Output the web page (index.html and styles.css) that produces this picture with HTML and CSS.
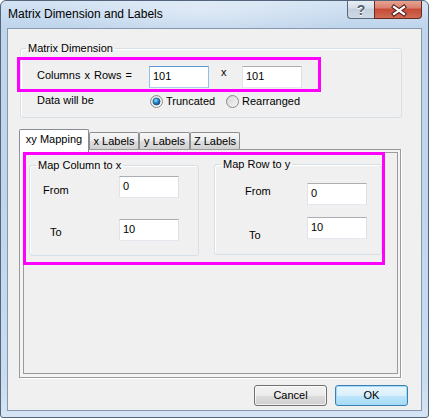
FILE: index.html
```html
<!DOCTYPE html>
<html>
<head>
<meta charset="utf-8">
<link rel="stylesheet" href="styles.css">
</head>
<body>
<div class="window">
  <div class="titlebar">
    <div class="title">Matrix Dimension and Labels</div>
    <div class="caption">
      <div class="cbtn help"><span>?</span></div>
      <div class="cbtn close">
        <svg width="46" height="18" viewBox="0 0 46 18">
          <path d="M19 7 L29 14 M29 7 L19 14" stroke="#4a1d18" stroke-width="4.2" stroke-linecap="square" fill="none"/>
          <path d="M19 7 L29 14 M29 7 L19 14" stroke="#ffffff" stroke-width="2.2" stroke-linecap="square" fill="none"/>
        </svg>
      </div>
    </div>
  </div>
  <div class="client">
    <fieldset class="group dim">
      <legend>Matrix Dimension</legend>
      <div class="hl hl-dim">
        <span class="lbl-cr">Columns x Rows =</span>
        <div class="edit focus">101</div>
        <span class="sep-x">x</span>
        <div class="edit">101</div>
      </div>
      <div class="data-row">
        <span class="lbl-data">Data will be</span>
        <div class="radio-item">
          <svg class="radio" width="13" height="13" viewBox="0 0 13 13">
            <defs>
              <linearGradient id="rbg" x1="0" y1="0" x2="1" y2="1">
                <stop offset="0" stop-color="#dcdcdc"/>
                <stop offset="1" stop-color="#ffffff"/>
              </linearGradient>
              <radialGradient id="dot" cx="0.4" cy="0.35" r="0.7">
                <stop offset="0" stop-color="#9fdcff"/>
                <stop offset="0.45" stop-color="#2a8fd0"/>
                <stop offset="1" stop-color="#0b3f6e"/>
              </radialGradient>
            </defs>
            <circle cx="6.5" cy="6.5" r="6" fill="url(#rbg)" stroke="#8a8a8a"/>
            <circle cx="6.5" cy="6.5" r="3.6" fill="url(#dot)" stroke="#1c4e7a" stroke-width="0.6"/>
          </svg>
          <span class="rtext">Truncated</span>
        </div>
        <div class="radio-item">
          <svg class="radio" width="13" height="13" viewBox="0 0 13 13">
            <defs>
              <linearGradient id="rbg2" x1="0" y1="0" x2="1" y2="1">
                <stop offset="0" stop-color="#cfcfcf"/>
                <stop offset="1" stop-color="#fbfbfb"/>
              </linearGradient>
            </defs>
            <circle cx="6.5" cy="6.5" r="6" fill="url(#rbg2)" stroke="#8a8a8a"/>
            <circle cx="6.5" cy="6.5" r="3.6" fill="none" stroke="#e8e8e8" stroke-width="0.8"/>
          </svg>
          <span class="rtext">Rearranged</span>
        </div>
      </div>
    </fieldset>

    <div class="tabs">
      <div class="tablist">
        <div class="tab active">xy Mapping</div>
        <div class="tab w50">x Labels</div>
        <div class="tab w51">y Labels</div>
        <div class="tab w50">Z Labels</div>
      </div>
      <div class="panel">
        <div class="panel-inner">
          <div class="hl hl-map">
            <fieldset class="group g1">
              <legend>Map Column to x</legend>
              <div class="frow r1a">
                <span class="flbl l1a">From</span>
                <div class="edit">0</div>
              </div>
              <div class="frow r1b">
                <span class="flbl l1b">To</span>
                <div class="edit">10</div>
              </div>
            </fieldset>
            <fieldset class="group g2">
              <legend>Map Row to y</legend>
              <div class="frow r2a">
                <span class="flbl l2a">From</span>
                <div class="edit">0</div>
              </div>
              <div class="frow r2b">
                <span class="flbl l2b">To</span>
                <div class="edit">10</div>
              </div>
            </fieldset>
          </div>
        </div>
      </div>
    </div>

    <div class="buttons">
      <div class="btn">Cancel</div>
      <div class="btn default">OK</div>
    </div>
  </div>
</div>
</body>
</html>
```

FILE: styles.css
```css
* { box-sizing: border-box; }

body {
  margin: 0;
  background: #ffffff;
  font-family: "Liberation Sans", Arial, sans-serif;
  font-size: 11px;
  line-height: 13px;
  color: #000;
}

.window {
  width: 429px;
  height: 418px;
  border: 1px solid #53657b;
  border-radius: 6px 6px 3px 3px;
  background: linear-gradient(180deg, #d4e3f3 0px, #bfd5ec 26px, #c0d6ed 200px, #cadcf0 380px, #d6e5f5 418px);
  display: flex;
  flex-direction: column;
  overflow: hidden;
}

.titlebar {
  height: 27px;
  flex-shrink: 0;
  display: flex;
  align-items: flex-start;
  background: radial-gradient(ellipse 160px 30px at 200px 10px, rgba(255,255,255,0.35), rgba(255,255,255,0));
}

.title {
  flex: 1;
  font-size: 12px;
  line-height: 14px;
  margin: 6px 0 0 7px;
  color: #000;
}

.caption {
  display: flex;
  margin: -1px 6px 0 0;
}

.cbtn {
  height: 19px;
  border: 1px solid #5b6878;
  border-top: none;
  display: flex;
  align-items: center;
  justify-content: center;
}

.help {
  width: 27px;
  border-right: none;
  border-radius: 0 0 0 4px;
  background: linear-gradient(180deg, #e9eff6 0%, #d5dfea 45%, #c3cfdd 50%, #cfd9e5 100%);
}

.help span {
  font-weight: bold;
  font-size: 14px;
  line-height: 14px;
  color: #56606c;
  text-shadow: 0 1px 0 #fff;
  margin-top: 1px;
}

.close {
  width: 48px;
  border-radius: 0 0 4px 0;
  border-color: #6a2a22;
  background: linear-gradient(180deg, #e8a797 0%, #d9806d 45%, #c74a35 50%, #cf6b55 100%);
}

.close svg { display: block; }

.client {
  margin: 0 6px;
  height: 383px;
  flex-shrink: 0;
  border: 1px solid #8598ae;
  background: #f0f0f0;
  display: flex;
  flex-direction: column;
  align-items: flex-start;
}

/* group boxes */
.group {
  margin: 0;
  padding: 0;
  border: 1px solid #d5dfe5;
  border-radius: 3px;
  box-shadow: inset 1px 1px 0 #fff;
  min-width: 0;
}

.group legend {
  padding: 0 2px;
  line-height: 13px;
}

.dim {
  width: 382px;
  margin: 13px 0 0 12px;
  padding-bottom: 9px;
}

.dim legend { margin-left: 5px; }

.hl {
  border: 3px solid #ff00ff;
  display: flex;
  align-items: flex-start;
}

.hl-dim {
  width: 304px;
  height: 35px;
  margin: 2px 0 0 -4px;
}

.lbl-cr {
  width: 112px;
  margin: 9px 0 0 17px;
  word-spacing: 1px;
  white-space: nowrap;
}

.sep-x {
  width: 33px;
  padding-left: 12px;
  margin-top: 6px;
}

.edit {
  width: 60px;
  height: 22px;
  flex-shrink: 0;
  background: #fff;
  border: 1px solid;
  border-color: #abadb3 #dbdfe6 #e3e9ef #e2e3ea;
  padding: 3px 0 0 3px;
}

.hl-dim .edit { margin-top: 6px; }

.edit.focus {
  border-color: #5c9ad6 #8fc0ea #a9d0f0 #8fc0ea;
}

.data-row {
  display: flex;
  align-items: flex-start;
}

.lbl-data {
  width: 113px;
  margin: 2px 0 0 16px;
}

.radio-item {
  width: 76px;
  display: flex;
  align-items: flex-start;
}

.radio {
  display: block;
  margin-top: 3px;
  flex-shrink: 0;
}

.rtext { margin: 3px 0 0 3px; }

/* tabs */
.tabs {
  margin: 11px 0 0 11px;
}

.tablist {
  display: flex;
  align-items: flex-end;
  height: 20px;
}

.tab {
  height: 17px;
  border: 1px solid #8c8e94;
  border-bottom: none;
  border-radius: 2px 2px 0 0;
  background: linear-gradient(180deg, #f6f6f6 0%, #ececec 50%, #dedede 51%, #d2d2d2 100%);
  text-align: center;
  padding-top: 2px;
  white-space: nowrap;
}

.w50 { width: 50px; }
.w51 { width: 51px; }

.tab.active {
  width: 70px;
  height: 23px;
  margin-bottom: -3px;
  padding-top: 3px;
  background: #ffffff;
  border-color: #898c95;
  position: relative;
  z-index: 1;
}

.panel {
  width: 382px;
  height: 229px;
  border: 1px solid #9a9a9a;
  padding: 2px 2px 3px 3px;
  background: #f4f4f4;
  box-shadow: 1px 1px 0 #ffffff;
}

.panel-inner {
  height: 100%;
  border: 1px solid #9a9a9a;
  background: #f0f0f0;
}

.hl-map {
  width: 362px;
  height: 113px;
  margin: -1px 0 0 -1px;
  position: relative;
  z-index: 2;
}

.g1 {
  width: 170px;
  margin: 4px 0 0 3px;
  padding-bottom: 14px;
}

.g2 {
  width: 168px;
  margin: 3px 0 0 15px;
  padding-bottom: 15px;
}

.g1 legend, .g2 legend { margin-left: 6px; }

.frow {
  display: flex;
  align-items: flex-start;
  height: 22px;
}

.r1a { margin-top: 4px; }
.r1b { margin-top: 21px; }
.r2a { margin-top: 12px; }
.r2b { margin-top: 12px; }

.flbl { flex-shrink: 0; }
.g1 .flbl { width: 89px; }
.g2 .flbl { width: 92px; }

.l1a { padding-left: 13px; margin-top: 8px; }
.l1b { padding-left: 20px; margin-top: 7px; }
.l2a { padding-left: 30px; margin-top: 2px; }
.l2b { padding-left: 34px; margin-top: 12px; }

/* buttons */
.buttons {
  align-self: stretch;
  display: flex;
  justify-content: flex-end;
  gap: 8px;
  margin-top: 7px;
  padding-right: 13px;
}

.btn {
  width: 73px;
  height: 21px;
  border: 1px solid #707070;
  border-radius: 3px;
  background: linear-gradient(180deg, #f2f2f2 0%, #ebebeb 50%, #dddddd 51%, #cfcfcf 100%);
  box-shadow: inset 0 0 0 1px rgba(255,255,255,0.7);
  text-align: center;
  padding-top: 3px;
}

.btn.default {
  border-color: #3c7fb1;
  background: linear-gradient(180deg, #eaf6fd 0%, #d9f0fc 50%, #bee6fd 51%, #a7d9f5 100%);
  box-shadow: inset 0 0 0 1px #9fdcfb;
}
```
